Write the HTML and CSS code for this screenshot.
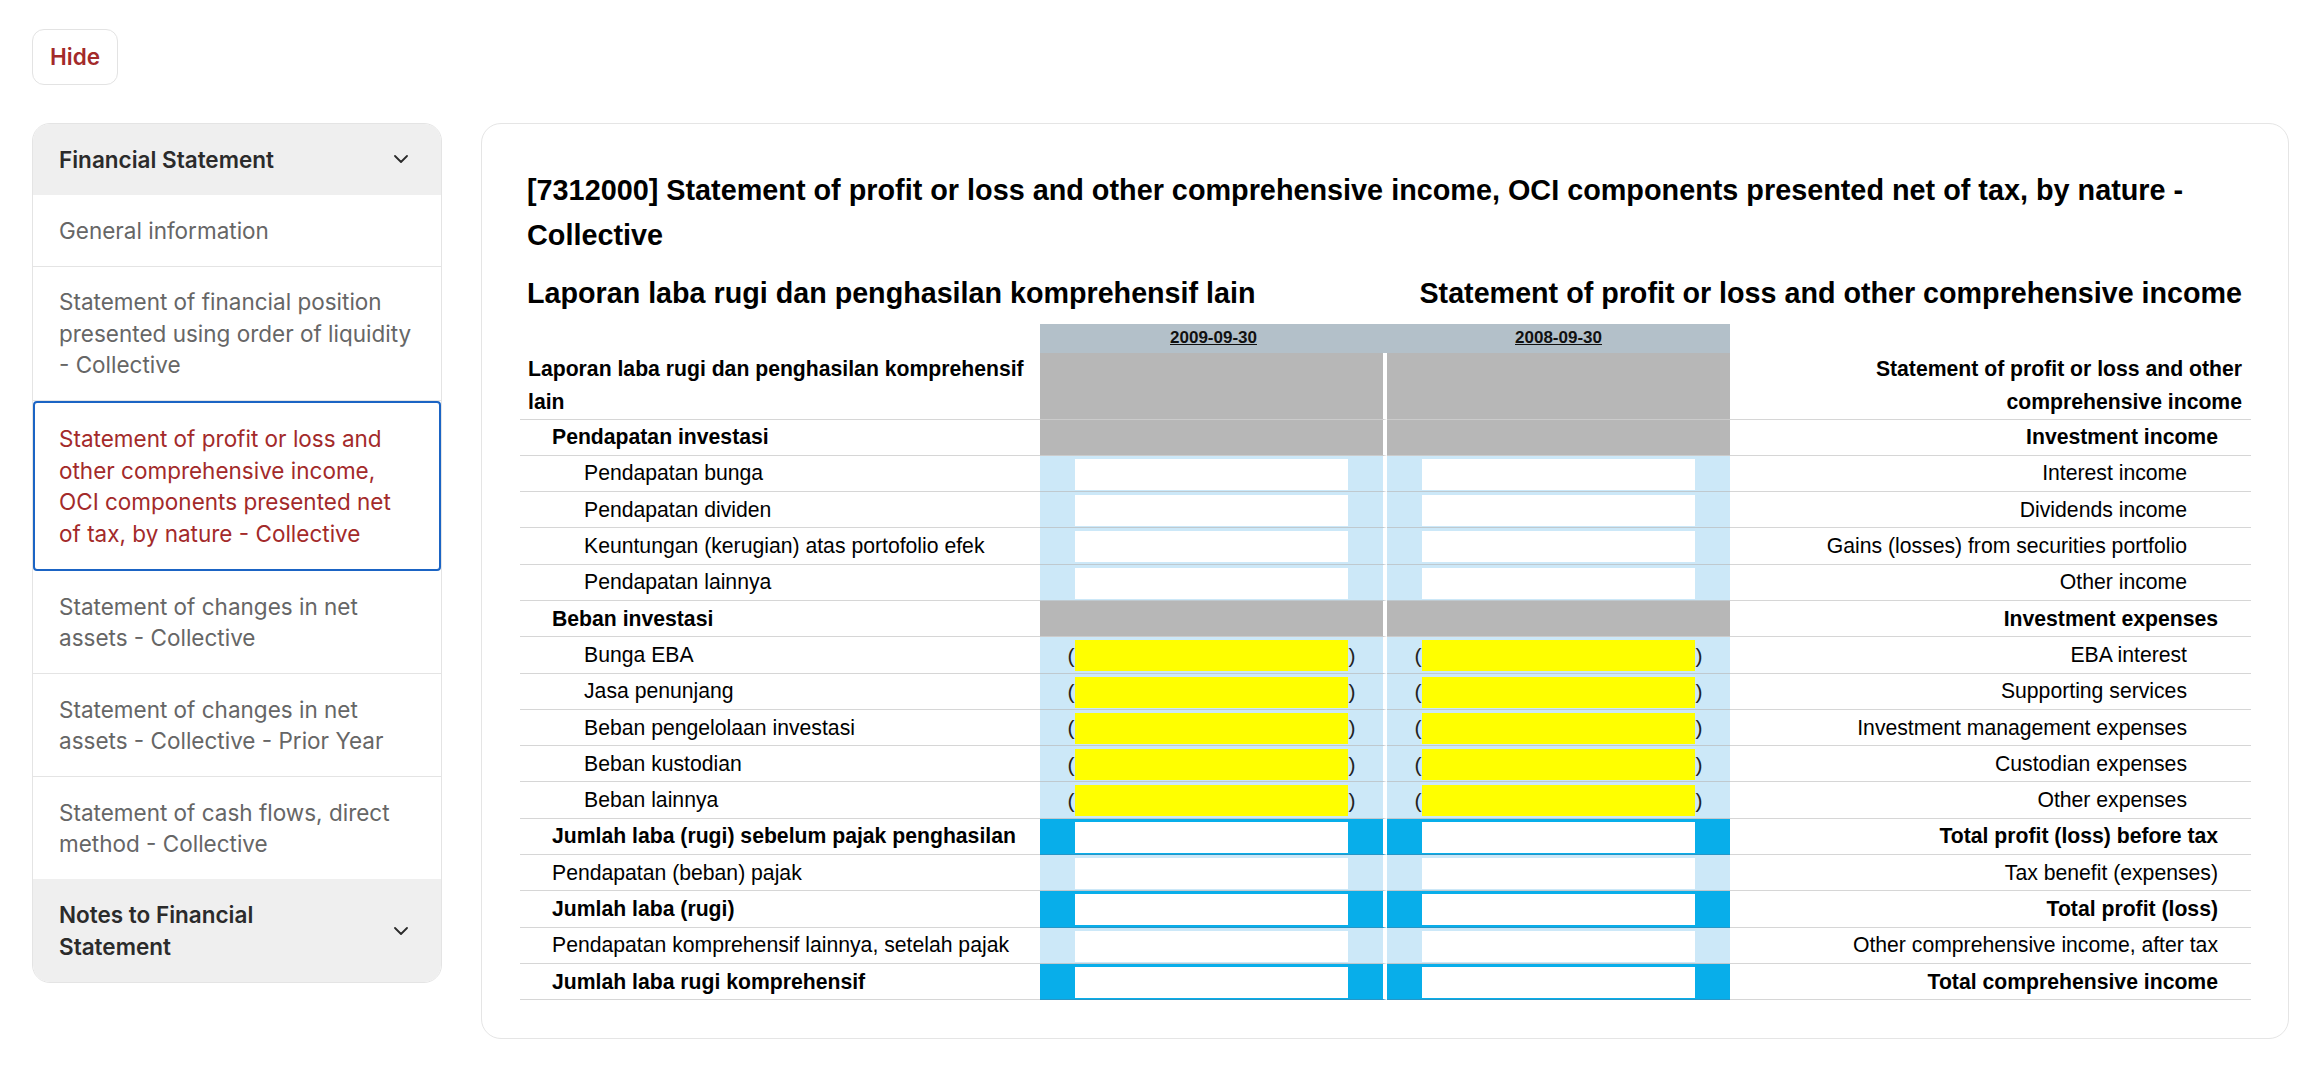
FILE: index.html
```html
<!DOCTYPE html>
<html lang="en">
<head>
<meta charset="utf-8">
<title>Statement of profit or loss</title>
<link rel="stylesheet" href="styles.css">
</head>
<body>
<div class="page">
  <button class="hide-btn" type="button">Hide</button>
  <div class="layout">
    <aside class="sidebar">
      <div class="group-head">
        <span class="group-title">Financial Statement</span>
        <svg class="chev" width="14" height="8" viewBox="0 0 14 8"><path d="M1 1l6 6 6-6" fill="none" stroke="#2b2b2b" stroke-width="1.8" stroke-linecap="round" stroke-linejoin="round"/></svg>
      </div>
      <a class="item">General information</a>
      <a class="item">Statement of financial position presented using order of liquidity - Collective</a>
      <a class="item active">Statement of profit or loss and other comprehensive income, OCI components presented net of tax, by nature - Collective</a>
      <a class="item">Statement of changes in net assets - Collective</a>
      <a class="item">Statement of changes in net assets - Collective - Prior Year</a>
      <a class="item last">Statement of cash flows, direct method - Collective</a>
      <div class="group-head">
        <span class="group-title">Notes to Financial Statement</span>
        <svg class="chev" width="14" height="8" viewBox="0 0 14 8"><path d="M1 1l6 6 6-6" fill="none" stroke="#2b2b2b" stroke-width="1.8" stroke-linecap="round" stroke-linejoin="round"/></svg>
      </div>
    </aside>

    <main class="card">
      <h1 class="title">[7312000] Statement of profit or loss and other comprehensive income, OCI components presented net of tax, by nature - Collective</h1>
      <div class="subtitles">
        <h2 class="sub">Laporan laba rugi dan penghasilan komprehensif lain</h2>
        <h2 class="sub">Statement of profit or loss and other comprehensive income</h2>
      </div>
      <table class="report">
        <colgroup>
          <col class="c-label"><col class="c-v1"><col class="c-v2"><col class="c-label-r">
        </colgroup>
        <tr class="dates">
          <th class="blank"></th><th class="date">2009-09-30</th><th class="date">2008-09-30</th><th class="blank"></th>
        </tr>
        <tr class="head">
          <td class="lbl hl b">Laporan laba rugi dan penghasilan komprehensif lain</td>
          <td class="v v1 gray"></td><td class="v gray"></td>
          <td class="lbl hr b">Statement of profit or loss and other comprehensive income</td>
        </tr>
        <tr class="row">
          <td class="lbl l1 b">Pendapatan investasi</td>
          <td class="v v1 gray"></td><td class="v gray"></td>
          <td class="lbl rl l1 b">Investment income</td>
        </tr>
        <tr class="row">
          <td class="lbl l2">Pendapatan bunga</td>
          <td class="v v1 in"><div class="box"></div></td><td class="v in"><div class="box"></div></td>
          <td class="lbl rl l2">Interest income</td>
        </tr>
        <tr class="row">
          <td class="lbl l2">Pendapatan dividen</td>
          <td class="v v1 in"><div class="box"></div></td><td class="v in"><div class="box"></div></td>
          <td class="lbl rl l2">Dividends income</td>
        </tr>
        <tr class="row">
          <td class="lbl l2">Keuntungan (kerugian) atas portofolio efek</td>
          <td class="v v1 in"><div class="box"></div></td><td class="v in"><div class="box"></div></td>
          <td class="lbl rl l2">Gains (losses) from securities portfolio</td>
        </tr>
        <tr class="row">
          <td class="lbl l2">Pendapatan lainnya</td>
          <td class="v v1 in"><div class="box"></div></td><td class="v in"><div class="box"></div></td>
          <td class="lbl rl l2">Other income</td>
        </tr>
        <tr class="row">
          <td class="lbl l1 b">Beban investasi</td>
          <td class="v v1 gray"></td><td class="v gray"></td>
          <td class="lbl rl l1 b">Investment expenses</td>
        </tr>
        <tr class="row">
          <td class="lbl l2">Bunga EBA</td>
          <td class="v v1 in neg"><div class="wrap"><span class="paren">(</span><div class="box y"></div><span class="paren">)</span></div></td>
          <td class="v in neg"><div class="wrap"><span class="paren">(</span><div class="box y"></div><span class="paren">)</span></div></td>
          <td class="lbl rl l2">EBA interest</td>
        </tr>
        <tr class="row">
          <td class="lbl l2">Jasa penunjang</td>
          <td class="v v1 in neg"><div class="wrap"><span class="paren">(</span><div class="box y"></div><span class="paren">)</span></div></td>
          <td class="v in neg"><div class="wrap"><span class="paren">(</span><div class="box y"></div><span class="paren">)</span></div></td>
          <td class="lbl rl l2">Supporting services</td>
        </tr>
        <tr class="row">
          <td class="lbl l2">Beban pengelolaan investasi</td>
          <td class="v v1 in neg"><div class="wrap"><span class="paren">(</span><div class="box y"></div><span class="paren">)</span></div></td>
          <td class="v in neg"><div class="wrap"><span class="paren">(</span><div class="box y"></div><span class="paren">)</span></div></td>
          <td class="lbl rl l2">Investment management expenses</td>
        </tr>
        <tr class="row">
          <td class="lbl l2">Beban kustodian</td>
          <td class="v v1 in neg"><div class="wrap"><span class="paren">(</span><div class="box y"></div><span class="paren">)</span></div></td>
          <td class="v in neg"><div class="wrap"><span class="paren">(</span><div class="box y"></div><span class="paren">)</span></div></td>
          <td class="lbl rl l2">Custodian expenses</td>
        </tr>
        <tr class="row">
          <td class="lbl l2">Beban lainnya</td>
          <td class="v v1 in neg"><div class="wrap"><span class="paren">(</span><div class="box y"></div><span class="paren">)</span></div></td>
          <td class="v in neg"><div class="wrap"><span class="paren">(</span><div class="box y"></div><span class="paren">)</span></div></td>
          <td class="lbl rl l2">Other expenses</td>
        </tr>
        <tr class="row">
          <td class="lbl l1 b">Jumlah laba (rugi) sebelum pajak penghasilan</td>
          <td class="v v1 tot"><div class="box"></div></td><td class="v tot"><div class="box"></div></td>
          <td class="lbl rl l1 b">Total profit (loss) before tax</td>
        </tr>
        <tr class="row">
          <td class="lbl l1">Pendapatan (beban) pajak</td>
          <td class="v v1 in"><div class="box"></div></td><td class="v in"><div class="box"></div></td>
          <td class="lbl rl l1">Tax benefit (expenses)</td>
        </tr>
        <tr class="row">
          <td class="lbl l1 b">Jumlah laba (rugi)</td>
          <td class="v v1 tot"><div class="box"></div></td><td class="v tot"><div class="box"></div></td>
          <td class="lbl rl l1 b">Total profit (loss)</td>
        </tr>
        <tr class="row">
          <td class="lbl l1">Pendapatan komprehensif lainnya, setelah pajak</td>
          <td class="v v1 in"><div class="box"></div></td><td class="v in"><div class="box"></div></td>
          <td class="lbl rl l1">Other comprehensive income, after tax</td>
        </tr>
        <tr class="row">
          <td class="lbl l1 b">Jumlah laba rugi komprehensif</td>
          <td class="v v1 tot"><div class="box"></div></td><td class="v tot"><div class="box"></div></td>
          <td class="lbl rl l1 b">Total comprehensive income</td>
        </tr>
      </table>
    </main>
  </div>
</div>
</body>
</html>
```

FILE: styles.css
```css
* { box-sizing: border-box; }

body {
  margin: 0;
  background: #ffffff;
  font-family: Inter, "Noto Sans", sans-serif;
}

.page {
  padding: 29px 27px 36px 32px;
}

.hide-btn {
  font-family: Inter, "Noto Sans", sans-serif;
  font-weight: 600;
  font-size: 22.5px;
  line-height: 31.5px;
  color: #a32a2a;
  background: #ffffff;
  border: 1px solid #e3e3e3;
  border-radius: 12px;
  padding: 11px 17px;
}

.layout {
  display: flex;
  align-items: flex-start;
  gap: 39px;
  margin-top: 38px;
}

/* Sidebar */
.sidebar {
  width: 410px;
  flex: none;
  border: 1px solid #e4e4e4;
  border-radius: 18px;
  overflow: hidden;
  background: #ffffff;
}

.group-head {
  display: flex;
  align-items: center;
  justify-content: space-between;
  background: #efefef;
  padding: 20px 33px 20px 26px;
  font-size: 22.5px;
  line-height: 31.5px;
  font-weight: 600;
  color: #2b2b2b;
}

.group-title {
  max-width: 270px;
}

.chev {
  flex: none;
}

.item {
  display: block;
  padding: 19.5px 26px;
  border-bottom: 1px solid #e4e4e4;
  font-size: 22.5px;
  line-height: 31.5px;
  color: #666666;
  cursor: pointer;
}

.item.last {
  border-bottom: none;
}

.item.active {
  color: #a32a2a;
  border: 2px solid #1b64c4;
  border-radius: 4px;
  padding: 20px 24px;
}

/* Card */
.card {
  flex: 1;
  min-width: 0;
  border: 1px solid #e5e5e5;
  border-radius: 20px;
  padding: 44px 37px 38px 38px;
  font-family: "Liberation Sans", Arial, sans-serif;
  color: #000000;
}

.title {
  margin: 0;
  padding: 0 9px 0 7px;
  font-size: 28.8px;
  line-height: 45px;
  font-weight: 700;
}

.subtitles {
  display: flex;
  justify-content: space-between;
  padding: 0 9px 0 7px;
  margin: 15px 0 11px;
}

.sub {
  margin: 0;
  font-size: 28.7px;
  line-height: 40px;
  font-weight: 700;
}

/* Table */
.report {
  width: 100%;
  table-layout: fixed;
  border-collapse: separate;
  border-spacing: 0;
  font-size: 21.2px;
}

.c-label { width: 520px; }
.c-v1 { width: 347px; }
.c-v2 { width: 343px; }

.dates th {
  height: 29px;
  padding: 0;
  background: #b3c0c9;
  font-size: 17px;
  font-weight: 700;
  text-decoration: underline;
  text-align: center;
  color: #111111;
}

.dates th.blank {
  background: transparent;
}

.head td {
  height: 67px;
}

.row td {
  height: 36.3px;
}

.lbl {
  padding: 0 9px;
  border-bottom: 1px solid #d6d6d6;
  line-height: 24px;
  vertical-align: middle;
  white-space: nowrap;
}

.lbl.hl,
.lbl.hr {
  white-space: normal;
  line-height: 32.5px;
}

.lbl.hl { padding: 0 4px 0 8px; }
.lbl.hr { padding: 0 9px 0 4px; text-align: right; }

.lbl.l1 { padding-left: 32px; }
.lbl.l2 { padding-left: 64px; }

.rl { text-align: right; }
.lbl.rl.l1 { padding-left: 9px; padding-right: 33px; }
.lbl.rl.l2 { padding-left: 9px; padding-right: 64px; }

.b { font-weight: 700; }

.v {
  padding: 3px 35px 0;
  vertical-align: top;
  border-bottom: 1px solid #c5c5c5;
}

.v1 {
  border-right: 4px solid #ffffff;
}

.v.gray {
  background: #b7b7b7;
  border-bottom-color: #cbcbcb;
}

.v.in {
  background: #cce8f8;
  border-bottom-color: #bfc9cf;
}

.v.tot {
  background: #08aeea;
  border-bottom-color: #2796c6;
}

.box {
  height: 31px;
  background: #ffffff;
}

.v.neg {
  padding: 3px 27px 0;
}

.wrap {
  display: flex;
  align-items: center;
}

.paren {
  width: 8px;
  flex: none;
  font-size: 21px;
  line-height: 24px;
  color: #222222;
  text-align: center;
}

.box.y {
  flex: 1;
  background: #ffff00;
}
```
